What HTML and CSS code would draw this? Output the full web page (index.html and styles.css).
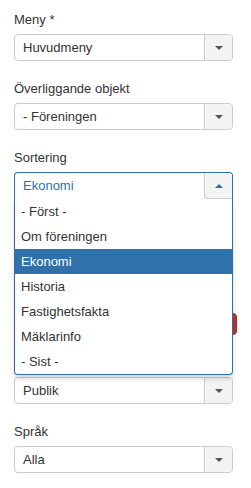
FILE: index.html
```html
<!DOCTYPE html>
<html lang="sv">
<head>
  <meta charset="UTF-8">
  <meta name="viewport" content="width=device-width, initial-scale=1.0">
  <title>Menyobjekt</title>
  <link rel="stylesheet" href="styles.css">
</head>
<body>

  <div class="form">
    <!-- Meny -->
    <div class="field">
      <label>Meny *</label>
      <div class="select">
        <span class="select-value">Huvudmeny</span>
        <span class="select-btn"><b class="arrow"></b></span>
      </div>
    </div>

    <!-- Överliggande objekt -->
    <div class="field">
      <label>Överliggande objekt</label>
      <div class="select">
        <span class="select-value">- Föreningen</span>
        <span class="select-btn"><b class="arrow"></b></span>
      </div>
    </div>

    <!-- Sortering (öppen) -->
    <div class="field">
      <label>Sortering</label>
      <div class="chosen">
        <div class="select open">
          <span class="select-value">Ekonomi</span>
          <span class="select-btn"><b class="arrow up"></b></span>
        </div>
        <ul class="drop">
          <li>- Först -</li>
          <li>Om föreningen</li>
          <li class="highlighted">Ekonomi</li>
          <li>Historia</li>
          <li>Fastighetsfakta</li>
          <li>Mäklarinfo</li>
          <li>- Sist -</li>
        </ul>
      </div>
    </div>

    <!-- fält som döljs bakom listan -->
    <div class="field">
      <label></label>
      <div class="select">
        <span class="select-value"></span>
        <span class="select-btn"><b class="arrow"></b></span>
      </div>
    </div>

    <div class="field">
      <label></label>
      <div class="toggle">
        <span class="toggle-btn"></span>
        <span class="toggle-btn active"></span>
      </div>
    </div>

    <!-- Åtkomst -->
    <div class="field">
      <label></label>
      <div class="select">
        <span class="select-value">Publik</span>
        <span class="select-btn"><b class="arrow"></b></span>
      </div>
    </div>

    <!-- Språk -->
    <div class="field">
      <label>Språk</label>
      <div class="select">
        <span class="select-value">Alla</span>
        <span class="select-btn"><b class="arrow"></b></span>
      </div>
    </div>
  </div>

</body>
</html>
```

FILE: styles.css
```css
* {
  margin: 0;
  padding: 0;
  box-sizing: border-box;
}

body {
  background: #fff;
  font-family: "Liberation Sans", Arial, sans-serif;
  font-size: 13px;
  color: #333;
}

.form {
  width: 233px;
  padding: 11px 0 0 14px;
}

.field {
  margin-bottom: 19px;
}

.field label {
  display: block;
  height: 18px;
  line-height: 18px;
  margin-bottom: 5px;
}

/* select (chosen) */
.select {
  display: flex;
  height: 27px;
  border: 1px solid #ccc;
  border-radius: 4px;
  background: #fff;
}

.select-value {
  flex: 1;
  padding-left: 8px;
  line-height: 25px;
  white-space: nowrap;
}

.select-btn {
  width: 28px;
  display: flex;
  align-items: center;
  justify-content: center;
  background: #f3f3f3;
  border-left: 1px solid #ccc;
  border-radius: 0 3px 3px 0;
}

.arrow {
  width: 0;
  height: 0;
  border-left: 4px solid transparent;
  border-right: 4px solid transparent;
  border-top: 4px solid #555;
}

.arrow.up {
  border-top: 0;
  border-bottom: 4px solid #2f6fa7;
}

/* öppen lista */
.chosen {
  position: relative;
  z-index: 5;
}

.select.open {
  border-color: #2f6fa7;
  border-bottom: 0;
  border-radius: 4px 4px 0 0;
  height: 27px;
}

.select.open .select-value {
  color: #2f6fa7;
  line-height: 26px;
}

.select.open .select-btn {
  border-bottom: 1px solid #ccc;
  border-radius: 0 3px 0 4px;
  height: 26px;
}

.drop {
  position: absolute;
  top: 100%;
  left: 0;
  right: 0;
  list-style: none;
  background: #fff;
  border: 1px solid #2f6fa7;
  border-top: 0;
  border-radius: 0 0 4px 4px;
  box-shadow: 0 4px 5px rgba(0, 0, 0, 0.15);
}

.drop li {
  height: 25px;
  line-height: 25px;
  padding-left: 6px;
  color: #333;
}

.drop li.highlighted {
  background: #3071a9;
  color: #fff;
}

/* knappgrupp */
.toggle {
  display: flex;
  height: 25px;
  padding-top: 3px;
}

.toggle-btn {
  flex: 1;
  height: 22px;
  background: #f3f3f3;
  border: 1px solid #ccc;
}

.toggle-btn.active {
  width: 80px;
  flex: none;
  margin-right: -4px;
  background: #bd362f;
  border-color: #a52c26;
  border-radius: 0 4px 4px 0;
}
```
